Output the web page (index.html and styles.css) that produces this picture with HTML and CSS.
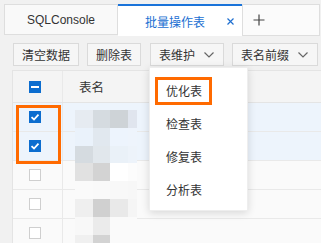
FILE: index.html
```html
<!DOCTYPE html>
<html lang="zh">
<head>
<meta charset="utf-8">
<link rel="stylesheet" href="styles.css">
</head>
<body>
<div class="tabs">
  <div class="tab tab-idle">SQLConsole</div>
  <div class="tab tab-active">
    <span class="tab-title">批量操作表</span>
    <svg class="tab-close" width="7" height="7" viewBox="0 0 7 7"><path d="M0.5 0.5L6.5 6.5M6.5 0.5L0.5 6.5" stroke="#1f6fd0" stroke-width="1.2" fill="none"/></svg>
  </div>
  <div class="tab tab-add">
    <svg width="12" height="12" viewBox="0 0 12 12"><path d="M6 0.5V11.5M0.5 6H11.5" stroke="#444" stroke-width="1.2" fill="none"/></svg>
  </div>
</div>

<div class="toolbar">
  <button class="btn">清空数据</button>
  <button class="btn">删除表</button>
  <div class="menu-wrap">
    <button class="btn btn-drop">表维护<svg class="chev" width="10" height="6" viewBox="0 0 10 6"><path d="M0.5 0.5L5 5L9.5 0.5" stroke="#666" stroke-width="1.2" fill="none"/></svg></button>
    <div class="dropdown">
      <div class="dd-item">优化表</div>
      <div class="dd-item">检查表</div>
      <div class="dd-item">修复表</div>
      <div class="dd-item">分析表</div>
      <div class="mark mark-menu"></div>
    </div>
  </div>
  <button class="btn btn-drop">表名前缀<svg class="chev" width="10" height="6" viewBox="0 0 10 6"><path d="M0.5 0.5L5 5L9.5 0.5" stroke="#666" stroke-width="1.2" fill="none"/></svg></button>
</div>

<div class="table">
  <div class="row head">
    <div class="cell cell-check"><span class="cb cb-ind"></span></div>
    <div class="cell cell-name">表名</div>
  </div>
  <div class="row sel">
    <div class="cell cell-check"><span class="cb cb-on"><svg width="12" height="12" viewBox="0 0 12 12"><path d="M2.5 6.2L5 8.5L9.5 3.6" stroke="#fff" stroke-width="1.8" fill="none"/></svg></span></div>
    <div class="cell cell-name"></div>
  </div>
  <div class="row sel">
    <div class="cell cell-check"><span class="cb cb-on"><svg width="12" height="12" viewBox="0 0 12 12"><path d="M2.5 6.2L5 8.5L9.5 3.6" stroke="#fff" stroke-width="1.8" fill="none"/></svg></span></div>
    <div class="cell cell-name"></div>
  </div>
  <div class="row">
    <div class="cell cell-check"><span class="cb"></span></div>
    <div class="cell cell-name"></div>
  </div>
  <div class="row">
    <div class="cell cell-check"><span class="cb"></span></div>
    <div class="cell cell-name"></div>
  </div>
  <div class="row">
    <div class="cell cell-check"><span class="cb"></span></div>
    <div class="cell cell-name"></div>
  </div>

  <div class="mosaic">
    <i style="background:#e6ebf1"></i><i style="background:#d5dbe0"></i><i style="background:#ced3d7"></i><i style="background:#e0e5ee"></i>
    <i style="background:#eaf2fb"></i><i style="background:#e1e8ef"></i><i style="background:#edf4fd"></i><i style="background:#eef4fc"></i>
    <i style="background:#d5dbe0"></i><i style="background:#e1e7ec"></i><i style="background:#eaf1f8"></i><i style="background:#edf3fa"></i>
    <i style="background:#e1e1e1"></i><i style="background:#d3d3d3"></i><i style="background:#ffffff"></i><i style="background:#fcfcfc"></i>
    <i style="background:#fafafa"></i><i style="background:#f9f9f9"></i><i style="background:#f8f8f8"></i><i style="background:#f7f7f7"></i>
    <i style="background:#efefef"></i><i style="background:#d0d0d0"></i><i style="background:#e9e9e9"></i><i style="background:#f5f5f5"></i>
    <i style="background:#f8f8f8"></i><i style="background:#ebebeb"></i><i style="background:#fafafa"></i><i style="background:#fafafa"></i>
    <i style="background:#f0f0f0"></i><i style="background:#d3d3d3"></i><i style="background:#fafafa"></i><i style="background:#fafafa"></i>
  </div>
  <div class="mark mark-checks"></div>
</div>
</body>
</html>
```

FILE: styles.css
```css
* { box-sizing: border-box; }

body {
  margin: 0;
  width: 321px;
  height: 243px;
  overflow: hidden;
  background: #f1f1f1;
  font-family: "Liberation Sans", "Noto Sans CJK SC", sans-serif;
  font-size: 12px;
  color: #333;
}

.tabs {
  display: flex;
  padding: 4px 1px 0 4px;
  height: 36px;
}

.tab {
  height: 32px;
  display: flex;
  align-items: center;
  border: 1px solid #dedede;
}

.tab-idle {
  width: 114px;
  height: 31px;
  justify-content: center;
  background: #f9f9f9;
}

.tab-active {
  width: 124px;
  background: #fff;
  border: none;
  border-top: 2px solid #1a73d9;
  padding: 0 8px 0 27px;
  color: #1a6fd2;
  justify-content: space-between;
}

.tab-close { display: block; }

.tab-add {
  flex: 1;
  background: #fbfbfb;
  padding-left: 10px;
}

.tab-add svg { display: block; }

.toolbar {
  display: flex;
  gap: 8px;
  padding: 7px 0 0 13px;
  height: 34px;
  position: relative;
  z-index: 2;
}

.btn {
  height: 23px;
  padding: 0 8px;
  border: 1px solid #dadada;
  background: #f6f6f6;
  font: inherit;
  color: #333;
  display: flex;
  align-items: center;
  white-space: nowrap;
}

.btn-drop { padding-right: 9px; }

.chev { margin-left: 9px; display: block; }

.menu-wrap {
  position: relative;
  margin-left: 1px;
}

.dropdown {
  position: absolute;
  left: -1px;
  top: 24px;
  width: 99px;
  height: 144px;
  padding: 6px 0;
  background: #fff;
  border: 1px solid #eee;
  box-shadow: 0 2px 8px rgba(0, 0, 0, 0.14);
}

.dd-item {
  height: 33px;
  display: flex;
  align-items: center;
  padding-left: 16px;
  color: #333;
}

.mark {
  position: absolute;
  border: 3px solid #ff6a00;
}

.mark-menu {
  left: 5px;
  top: 9px;
  width: 57px;
  height: 28px;
}

.table {
  position: relative;
  margin-left: 12px;
  background: #fafafa;
  border-top: 1px solid #e4e4e4;
  border-left: 1px solid #e4e4e4;
}

.row {
  display: grid;
  grid-template-columns: 50px 1fr;
  height: 29px;
  border-bottom: 1px solid #e9e9e9;
}

.row.head {
  height: 32px;
  background: #f4f4f4;
  border-bottom-color: #e4e4e4;
}

.row.sel { background: #edf4fc; }

.cell {
  display: flex;
  align-items: center;
}

.cell-check {
  padding-left: 16px;
  border-right: 1px solid #e9e9e9;
}

.cell-name {
  padding-left: 16px;
  font-size: 12.5px;
}

.cb {
  width: 12px;
  height: 12px;
  border: 1px solid #cfcfcf;
  background: #fff;
  display: block;
  position: relative;
}

.cb-on, .cb-ind {
  background: #0c6dcf;
  border-color: #0c6dcf;
}

.cb-on svg {
  position: absolute;
  left: -1px;
  top: -1px;
}

.cb-ind::after {
  content: "";
  position: absolute;
  left: 1px;
  right: 1px;
  top: 4px;
  height: 2px;
  background: #fff;
}

.mosaic {
  position: absolute;
  left: 62px;
  top: 39px;
  display: grid;
  grid-template-columns: 18px 17px 18px 9px;
  grid-auto-rows: 17.8px;
}

.mosaic i { display: block; }

.mark-checks {
  left: 3px;
  top: 34px;
  width: 45px;
  height: 59px;
}
```
